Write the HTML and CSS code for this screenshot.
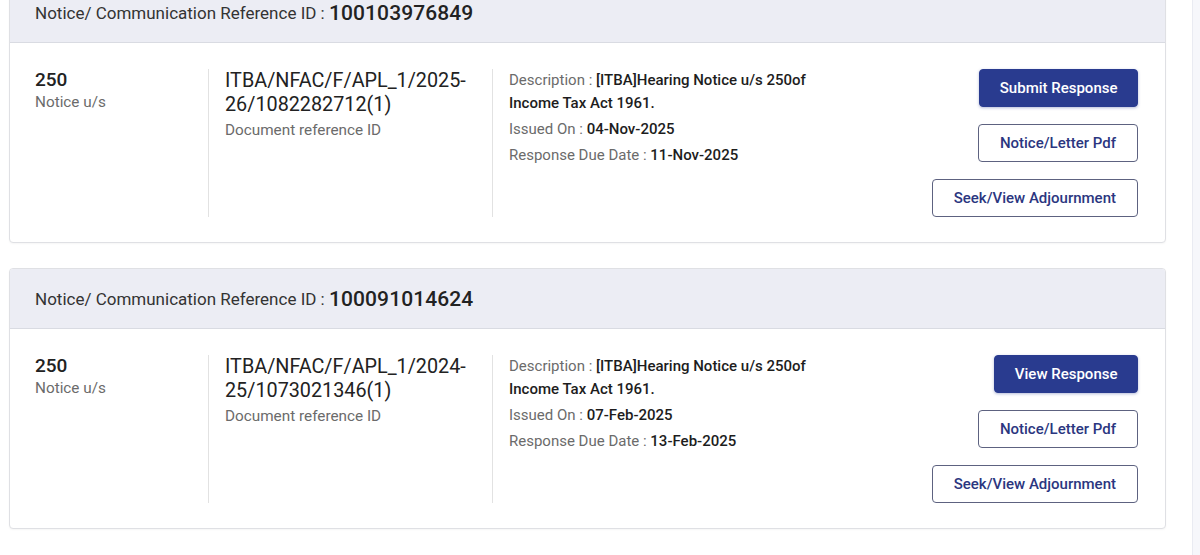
FILE: index.html
```html
<!DOCTYPE html>
<html lang="en">
<head>
<meta charset="utf-8">
<title>Notices</title>
<link rel="stylesheet" href="styles.css">
</head>
<body>
<div class="page">
  <main class="list">
    <section class="card first">
      <header class="card-head">
        <span class="head-label">Notice/ Communication Reference ID : </span><span class="head-id">100103976849</span>
      </header>
      <div class="card-body">
        <div class="col col-sec">
          <div class="big">250</div>
          <div class="muted">Notice u/s</div>
        </div>
        <div class="col col-doc">
          <div class="doc-id">ITBA/NFAC/F/APL_1/2025-26/1082282712(1)</div>
          <div class="muted doc-label">Document reference ID</div>
        </div>
        <div class="col col-desc">
          <p class="line"><span class="lbl">Description : </span><b class="val">[ITBA]Hearing Notice u/s 250of Income Tax Act 1961.</b></p>
          <p class="line"><span class="lbl">Issued On : </span><b class="val">04-Nov-2025</b></p>
          <p class="line"><span class="lbl">Response Due Date : </span><b class="val">11-Nov-2025</b></p>
        </div>
        <div class="actions">
          <button class="btn btn-primary">Submit Response</button>
          <button class="btn btn-outline">Notice/Letter Pdf</button>
          <button class="btn btn-outline">Seek/View Adjournment</button>
        </div>
      </div>
    </section>

    <section class="card">
      <header class="card-head">
        <span class="head-label">Notice/ Communication Reference ID : </span><span class="head-id">100091014624</span>
      </header>
      <div class="card-body">
        <div class="col col-sec">
          <div class="big">250</div>
          <div class="muted">Notice u/s</div>
        </div>
        <div class="col col-doc">
          <div class="doc-id">ITBA/NFAC/F/APL_1/2024-25/1073021346(1)</div>
          <div class="muted doc-label">Document reference ID</div>
        </div>
        <div class="col col-desc">
          <p class="line"><span class="lbl">Description : </span><b class="val">[ITBA]Hearing Notice u/s 250of Income Tax Act 1961.</b></p>
          <p class="line"><span class="lbl">Issued On : </span><b class="val">07-Feb-2025</b></p>
          <p class="line"><span class="lbl">Response Due Date : </span><b class="val">13-Feb-2025</b></p>
        </div>
        <div class="actions">
          <button class="btn btn-primary">View Response</button>
          <button class="btn btn-outline">Notice/Letter Pdf</button>
          <button class="btn btn-outline">Seek/View Adjournment</button>
        </div>
      </div>
    </section>
  </main>
  <div class="track"></div>
</div>
</body>
</html>
```

FILE: styles.css
```css
* { box-sizing: border-box; }
html, body { margin: 0; padding: 0; }
body {
  font-family: Roboto, "Liberation Sans", Arial, sans-serif;
  color: #222;
  background: #fff;
  height: 555px;
  overflow: hidden;
}
.page {
  display: flex;
  height: 555px;
}
.list {
  flex: 1;
  padding: 0 26px 0 9px;
}
.track {
  width: 8px;
  background: #f6f7fb;
  border-left: 1px solid #e9ebf2;
}
.card {
  border: 1px solid #dfe0e4;
  border-radius: 4px;
  background: #fff;
  box-shadow: 0 1px 2px rgba(0,0,0,0.04);
  margin-bottom: 25px;
  overflow: hidden;
}
.card.first {
  margin-top: -18px;
}
.card-head {
  height: 60px;
  background: #ecedf4;
  border-bottom: 1px solid #d9dbe2;
  display: flex;
  align-items: center;
  padding: 0 0 0 25px;
}
.head-label {
  font-size: 17px;
  color: #333;
  white-space: pre;
}
.head-id {
  font-size: 21px;
  font-weight: 500;
  color: #222;
  letter-spacing: 0.1px;
}
.card-body {
  display: flex;
  align-items: stretch;
  padding: 26px 27px 25px 25px;
}
.col-sec {
  width: 173px;
  flex: none;
}
.col-doc {
  width: 284px;
  flex: none;
  border-left: 1px solid #e2e2e2;
  padding-left: 16px;
  padding-right: 20px;
}
.col-desc {
  width: 336px;
  flex: none;
  border-left: 1px solid #e2e2e2;
  padding-left: 16px;
  padding-right: 16px;
}
.big {
  font-size: 19px;
  font-weight: 500;
  line-height: 22px;
  color: #222;
}
.muted {
  color: #6b6b6b;
  font-size: 15.3px;
  line-height: 22px;
}
.doc-id {
  font-size: 19.8px;
  line-height: 24px;
  color: #222;
  word-break: break-word;
}
.doc-label {
  margin-top: 2px;
}
.line {
  margin: 0 0 3px;
  font-size: 15px;
  line-height: 23px;
  color: #6b6b6b;
}
.val {
  font-weight: 500;
  color: #1d1d1d;
}
.actions {
  flex: 1;
  display: flex;
  flex-direction: column;
  align-items: flex-end;
  gap: 17px;
}
.btn {
  height: 38px;
  font-family: inherit;
  font-size: 15px;
  font-weight: 500;
  border-radius: 4px;
  padding: 0 21px;
  cursor: pointer;
}
.btn-primary {
  background: #293b8f;
  color: #fff;
  border: 1px solid #293b8f;
  box-shadow: 0 1px 3px rgba(41,59,143,0.35);
  padding: 0 19.5px;
}
.btn-outline {
  background: #fff;
  color: #2b3680;
  border: 1px solid #5d6280;
}
```
